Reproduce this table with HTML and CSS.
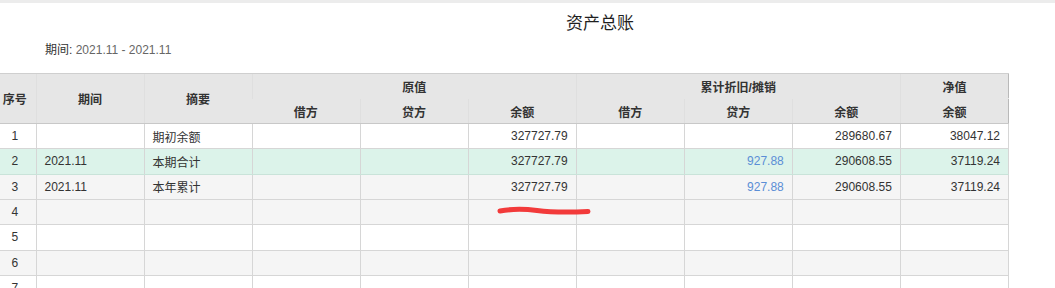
FILE: index.html
```html
<!DOCTYPE html>
<html lang="zh-CN">
<head>
<meta charset="utf-8">
<title>资产总账</title>
<link rel="stylesheet" href="styles.css">
</head>
<body>
<div class="topbar"></div>
<div class="title">资产总账</div>
<div class="period"><span class="label">期间:</span> <span class="range">2021.11 - 2021.11</span></div>
<div class="table-wrap">
<table class="ledger">
  <colgroup>
    <col class="c-no"><col class="c"><col class="c"><col class="c"><col class="c"><col class="c"><col class="c"><col class="c"><col class="c"><col class="c">
  </colgroup>
  <thead>
    <tr>
      <th rowspan="2">序号</th>
      <th rowspan="2">期间</th>
      <th rowspan="2">摘要</th>
      <th colspan="3" class="grp">原值</th>
      <th colspan="3" class="grp">累计折旧/摊销</th>
      <th class="grp">净值</th>
    </tr>
    <tr>
      <th>借方</th><th>贷方</th><th>余额</th>
      <th>借方</th><th>贷方</th><th>余额</th>
      <th>余额</th>
    </tr>
  </thead>
  <tbody>
    <tr class="r-white">
      <td class="no">1</td><td></td><td>期初余额</td><td></td><td></td><td class="num">327727.79</td><td></td><td></td><td class="num">289680.67</td><td class="num">38047.12</td>
    </tr>
    <tr class="r-sel">
      <td class="no">2</td><td>2021.11</td><td>本期合计</td><td></td><td></td><td class="num">327727.79</td><td></td><td class="num link">927.88</td><td class="num">290608.55</td><td class="num">37119.24</td>
    </tr>
    <tr class="r-gray">
      <td class="no">3</td><td>2021.11</td><td>本年累计</td><td></td><td></td><td class="num">327727.79</td><td></td><td class="num link">927.88</td><td class="num">290608.55</td><td class="num">37119.24</td>
    </tr>
    <tr class="r-gray">
      <td class="no">4</td><td></td><td></td><td></td><td></td><td class="num"></td><td></td><td></td><td></td><td></td>
    </tr>
    <tr class="r-white">
      <td class="no">5</td><td></td><td></td><td></td><td></td><td></td><td></td><td></td><td></td><td></td>
    </tr>
    <tr class="r-gray">
      <td class="no">6</td><td></td><td></td><td></td><td></td><td></td><td></td><td></td><td></td><td></td>
    </tr>
    <tr class="r-white">
      <td class="no">7</td><td></td><td></td><td></td><td></td><td></td><td></td><td></td><td></td><td></td>
    </tr>
  </tbody>
</table>
<svg class="mark" width="96" height="12" viewBox="0 0 96 12" aria-hidden="true">
  <path d="M3 6 C 14 4, 28 4, 40 5.5 S 70 7.5, 91 6.5" fill="none" stroke="#f23a3a" stroke-width="5" stroke-linecap="round"/>
</svg>
</div>
</body>
</html>
```

FILE: styles.css
```css
html, body {
  margin: 0;
  padding: 0;
  background: #ffffff;
  font-family: "Liberation Sans", "Noto Sans CJK SC", Arial, sans-serif;
  font-size: 12px;
  color: #333333;
  overflow: hidden;
}

.topbar {
  height: 3px;
  background: #ececec;
}

.title {
  margin-top: 9px;
  height: 24px;
  line-height: 24px;
  text-align: center;
  font-size: 17px;
  color: #1f1f1f;
  padding-left: 145px;
}

.period {
  margin-top: 6px;
  padding-left: 45px;
  line-height: 16px;
  height: 16px;
  font-size: 12px;
}

.period .label {
  color: #333333;
}

.period .range {
  color: #666666;
}

.table-wrap {
  position: relative;
  margin-top: 15px;
  margin-left: -6px;
}

.ledger {
  border-collapse: collapse;
  table-layout: fixed;
  width: 1015px;
  border-right: 1px solid #b9b9b9;
}

.ledger .c-no { width: 42px; }
.ledger .c { width: 108px; }

.ledger th {
  background: #e6e6e6;
  font-weight: bold;
  color: #333333;
  height: 24px;
  padding: 0;
  text-align: center;
  vertical-align: middle;
  border-left: 1px solid #dfdfdf;
  border-top: 1px solid #d2d2d2;
}

.ledger thead tr:first-child th {
  border-top: 1px solid #cfcfcf;
}

.ledger thead tr:nth-child(2) th {
  border-top: 1px solid #e6e6e6;
  border-bottom: 1px solid #c8c8c8;
}

.ledger thead tr:first-child th[rowspan] {
  border-bottom: 1px solid #c8c8c8;
}

.ledger thead th:first-child {
  border-left: none;
}

.ledger td {
  height: 24.34px;
  padding: 0 8px;
  border: 1px solid #d6d6d6;
  white-space: nowrap;
  overflow: hidden;
  color: #333333;
}

.ledger td:first-child {
  border-left: none;
}

.ledger td.no {
  text-align: center;
  padding: 0;
}

.ledger td.num {
  text-align: right;
  padding-right: 8px;
}

.ledger td.link {
  color: #5b8ed6;
}

.r-white td { background: #ffffff; }
.r-gray td { background: #f5f5f5; }
.r-sel td {
  background: #dcf3ea;
  border-top-color: #bfe0d4;
  border-bottom-color: #c9e3d9;
}

.mark {
  position: absolute;
  left: 503px;
  top: 132px;
}
```
